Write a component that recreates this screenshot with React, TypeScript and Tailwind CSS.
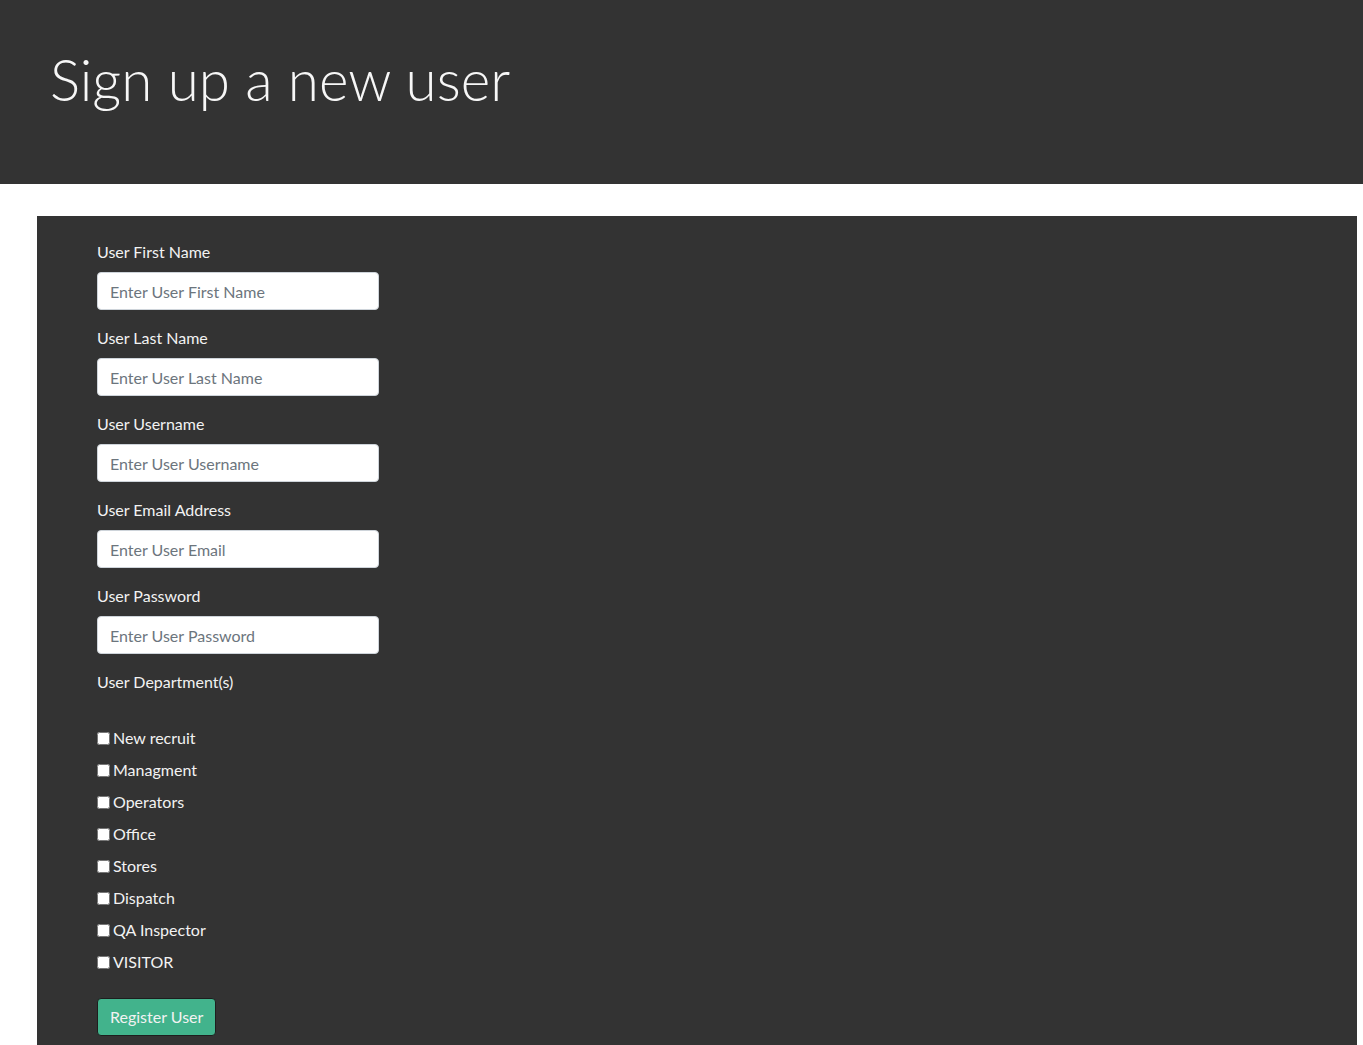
const departments = [
  'New recruit',
  'Managment',
  'Operators',
  'Office',
  'Stores',
  'Dispatch',
  'QA Inspector',
  'VISITOR',
];

const fields = [
  { label: 'User First Name', placeholder: 'Enter User First Name', type: 'text' },
  { label: 'User Last Name', placeholder: 'Enter User Last Name', type: 'text' },
  { label: 'User Username', placeholder: 'Enter User Username', type: 'text' },
  { label: 'User Email Address', placeholder: 'Enter User Email', type: 'email' },
  { label: 'User Password', placeholder: 'Enter User Password', type: 'password' },
];

export default function App() {
  return (
    <div className="min-h-screen bg-white font-['Lato','Noto_Sans',sans-serif] text-base text-[#f2f2f2]">
      <header className="mb-8 h-[184px] bg-[#333333] px-[50px] pt-[46px]">
        <h1 className="text-[56.5px] font-light leading-[1.2] text-[#f7f7f7]">Sign up a new user</h1>
      </header>
      <main className="ml-[37px] mr-[6px] bg-[#333333] px-[60px] pb-6 pt-6">
        <form onSubmit={(e) => e.preventDefault()}>
          {fields.map((f) => (
            <div key={f.label} className="mb-4">
              <label className="mb-2 block leading-6">{f.label}</label>
              <input
                type={f.type}
                placeholder={f.placeholder}
                className="block h-[38px] w-[282px] rounded border border-[#ced4da] bg-white px-3 text-base text-[#495057] placeholder:text-[#6c757d]"
              />
            </div>
          ))}
          <div className="mb-6">
            <label className="mb-2 block leading-6">User Department(s)</label>
            <div className="flex flex-col gap-2 pt-6">
              {departments.map((d) => (
                <label key={d} className="flex h-6 items-center">
                  <input type="checkbox" className="m-0 mr-[3px] h-[13px] w-[13px]" />
                  <span className="leading-6">{d}</span>
                </label>
              ))}
            </div>
          </div>
          <button
            type="submit"
            className="h-[38px] rounded border border-[#1e1e1e] bg-[#42b38c] px-3 text-base text-[#f2f2f2]"
          >
            Register User
          </button>
        </form>
      </main>
    </div>
  );
}
